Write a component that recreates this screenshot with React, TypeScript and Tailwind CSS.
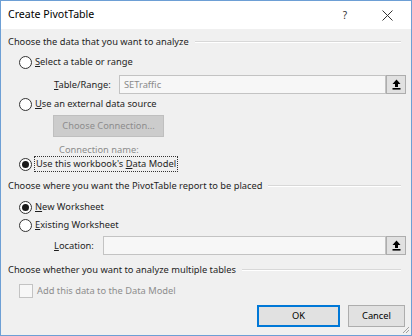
import React from 'react'

const font = { fontFamily: '"Segoe UI", "Noto Sans", sans-serif' }

function Radio({ checked }: { checked?: boolean }) {
  return (
    <span className="flex h-[13px] w-[13px] shrink-0 items-center justify-center rounded-full border border-[#333333] bg-white">
      {checked && <span className="h-[7px] w-[7px] rounded-full bg-[#1a1a1a]" />}
    </span>
  )
}

function RefButton() {
  return (
    <span className="flex h-full w-[20px] shrink-0 items-center justify-center border border-[#adadad] bg-[#e1e1e1]">
      <svg width="9" height="11" viewBox="0 0 9 11">
        <path d="M4.5 0.5 L8.5 5 H6 V8 H3 V5 H0.5 Z" fill="#000" />
        <rect x="0.5" y="9" width="8" height="1.6" fill="#000" />
      </svg>
    </span>
  )
}

function Heading({ children, className }: { children: React.ReactNode; className?: string }) {
  return (
    <div className={`flex h-[16px] items-center gap-[6px] pr-[5px] ${className ?? ''}`}>
      <span className="whitespace-nowrap">{children}</span>
      <span className="flex flex-1 flex-col">
        <span className="h-px bg-[#d8d8d8]" />
        <span className="h-px bg-white" />
      </span>
    </div>
  )
}

export default function App() {
  return (
    <div
      style={font}
      className="relative flex h-[336px] w-[412px] flex-col border border-[#6d9fd5] bg-[#f0f0f0] text-[9.3px] text-[#1e1e1e]"
    >
      {/* title bar */}
      <div className="flex h-[28px] shrink-0 items-center bg-white pl-[7px]">
        <span className="flex-1 text-[10.6px] text-black">Create PivotTable</span>
        <span className="w-[20px] text-center text-[10px] text-[#333]">?</span>
        <span className="ml-[26px] mr-[18px] flex w-[12px] justify-center">
          <svg width="11" height="11" viewBox="0 0 11 11">
            <path d="M0.5 0.5 L10.5 10.5 M10.5 0.5 L0.5 10.5" stroke="#333" strokeWidth="1" />
          </svg>
        </span>
      </div>

      <div className="flex flex-1 flex-col pl-[7px] pr-[5px]">
        <Heading className="mt-[5px]">Choose the data that you want to analyze</Heading>

        <label className="mt-[3px] flex h-[18px] items-center gap-[3px] pl-[11px]">
          <Radio />
          <span>
            <u>S</u>elect a table or range
          </span>
        </label>

        <div className="mt-[4px] flex h-[19px] items-center pl-[46px]">
          <span className="w-[65px]">
            <u>T</u>able/Range:
          </span>
          <div className="flex h-full flex-1 items-stretch">
            <span className="flex flex-1 items-center border border-[#c3c3c3] bg-[#f7f7f7] pl-[4px] text-[#8a8a8a]">
              SETraffic
            </span>
            <RefButton />
          </div>
        </div>

        <label className="mt-px flex h-[18px] items-center gap-[3px] pl-[11px]">
          <Radio />
          <span>
            <u>U</u>se an external data source
          </span>
        </label>

        <div className="mt-[2px] pl-[45px]">
          <span className="flex h-[22px] w-[111px] items-center justify-center whitespace-nowrap border border-[#bfbfbf] bg-[#cccccc] text-[#8d8d8d]">
            Choose Connection...
          </span>
        </div>

        <div className="mt-[6px] flex h-[13px] items-center pl-[51px] text-[#8d8d8d]">Connection name:</div>

        <label className="flex h-[16px] items-center gap-[2px] pl-[11px]">
          <Radio checked />
          <span className="border border-dotted border-[#333] px-[1px] leading-[14px]">
            Use this workbook's <u>D</u>ata Model
          </span>
        </label>

        <Heading className="mt-[6px]">Choose where you want the PivotTable report to be placed</Heading>

        <label className="mt-[4px] flex h-[18px] items-center gap-[3px] pl-[11px]">
          <Radio checked />
          <span>
            <u>N</u>ew Worksheet
          </span>
        </label>

        <label className="flex h-[18px] items-center gap-[3px] pl-[11px]">
          <Radio />
          <span>
            <u>E</u>xisting Worksheet
          </span>
        </label>

        <div className="mt-[2px] flex h-[19px] items-center pl-[46px]">
          <span className="w-[49px]">
            <u>L</u>ocation:
          </span>
          <div className="flex h-full flex-1 items-stretch">
            <span className="flex-1 border border-[#c3c3c3] bg-[#f7f7f7]" />
            <RefButton />
          </div>
        </div>

        <Heading className="mt-[7px]">Choose whether you want to analyze multiple tables</Heading>

        <label className="mt-[4px] flex h-[18px] items-center gap-[4px] pl-[11px] text-[#8d8d8d]">
          <span className="h-[14px] w-[14px] border border-[#c3c3c3] bg-[#f7f7f7]" />
          <span>Add this data to the Data Model</span>
        </label>

        <div className="mt-[5px] flex justify-end gap-[8px] pr-[1px]">
          <span className="flex h-[22px] w-[83px] items-center justify-center border-2 border-[#0078d7] bg-[#e1e1e1] text-black">
            OK
          </span>
          <span className="flex h-[22px] w-[57px] items-center justify-center border border-[#adadad] bg-[#e1e1e1] text-black">
            Cancel
          </span>
        </div>
      </div>

      {/* resize grip */}
      <svg className="absolute bottom-px right-px" width="8" height="8" viewBox="0 0 8 8">
        <path d="M7 1 L1 7 M7 4 L4 7" stroke="#a0a0a0" strokeWidth="1" />
      </svg>
    </div>
  )
}
